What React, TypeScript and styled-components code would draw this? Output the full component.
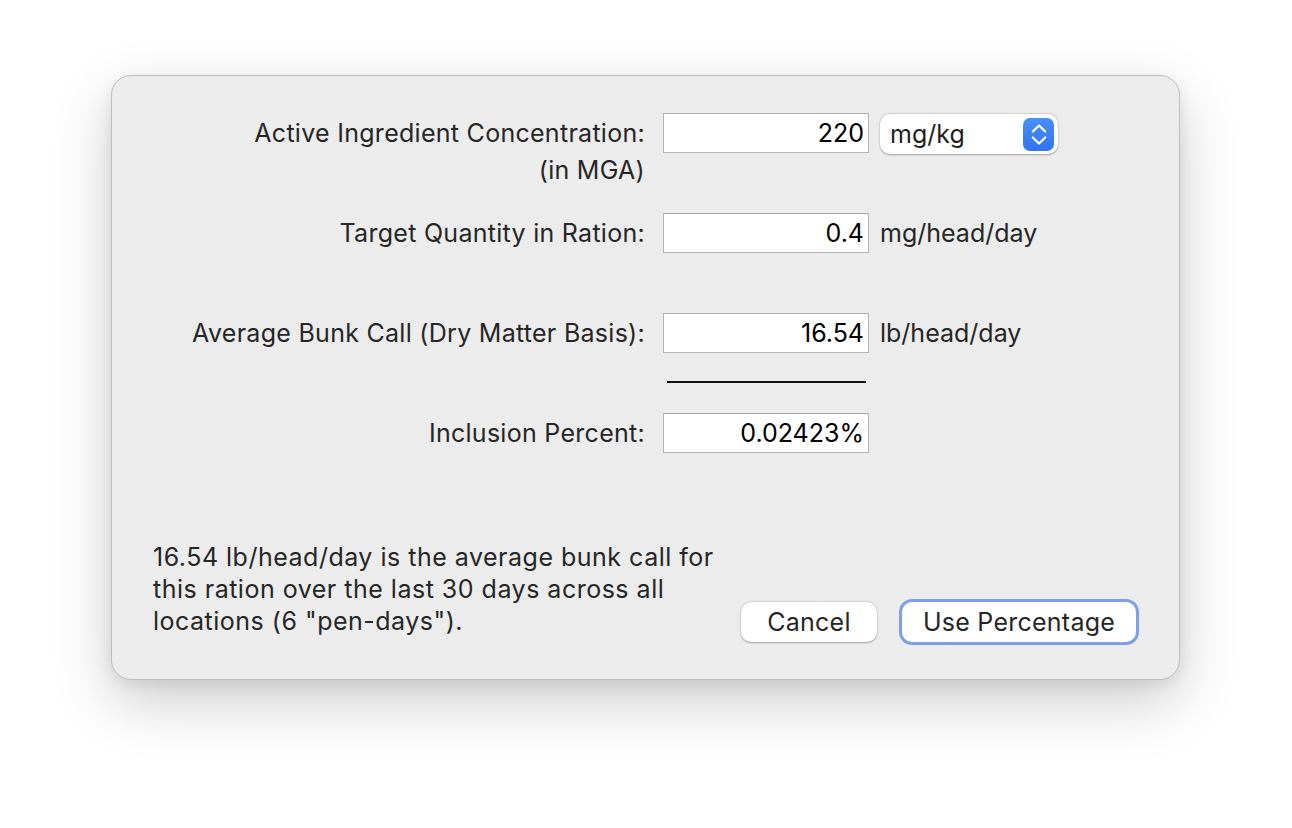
import { ReactElement } from "react";
import styled, { createGlobalStyle } from "styled-components";

const GlobalStyle = createGlobalStyle`
  html, body {
    margin: 0;
    padding: 0;
    background: #ffffff;
  }
  body {
    font-family: "Inter", "Noto Sans", sans-serif;
    -webkit-font-smoothing: antialiased;
  }
`;

type FieldRow = {
  label: string;
  sub?: string;
  value: string;
  unit?: string;
  popup?: string;
};

const rows: FieldRow[] = [
  { label: "Active Ingredient Concentration:", sub: "(in MGA)", value: "220", popup: "mg/kg" },
  { label: "Target Quantity in Ration:", value: "0.4", unit: "mg/head/day" },
  { label: "Average Bunk Call (Dry Matter Basis):", value: "16.54", unit: "lb/head/day" },
];

const rowHeights = ["100px", "100px", "60px"];

function Stepper(): ReactElement {
  return (
    <StepperBox>
      <svg width="16" height="23" viewBox="0 0 16 23" fill="none">
        <path d="M1.8 8.5 L8 2.5 L14.2 8.5" stroke="#fff" strokeWidth="2.2" strokeLinecap="round" strokeLinejoin="round" />
        <path d="M1.8 14.5 L8 20.5 L14.2 14.5" stroke="#fff" strokeWidth="2.2" strokeLinecap="round" strokeLinejoin="round" />
      </svg>
    </StepperBox>
  );
}

export default function App(): ReactElement {
  return (
    <Page>
      <GlobalStyle />
      <Dialog>
        <Form>
          {rows.map((row, i) => (
            <Row key={row.label} height={rowHeights[i]}>
              <Label>
                <LabelLine>{row.label}</LabelLine>
                {row.sub && <LabelSub>{row.sub}</LabelSub>}
              </Label>
              <Field>{row.value}</Field>
              {row.popup && (
                <Popup>
                  <span>{row.popup}</span>
                  <Stepper />
                </Popup>
              )}
              {row.unit && <Unit>{row.unit}</Unit>}
            </Row>
          ))}
          <DividerRow>
            <Divider />
          </DividerRow>
          <Row height="40px">
            <Label>
              <LabelLine>Inclusion Percent:</LabelLine>
            </Label>
            <Field>0.02423%</Field>
          </Row>
        </Form>
        <Footer>
          <Note>
            16.54 lb/head/day is the average bunk call for
            <br />
            this ration over the last 30 days across all
            <br />
            locations (6 "pen-days").
          </Note>
          <Buttons>
            <Button>Cancel</Button>
            <Button primary>Use Percentage</Button>
          </Buttons>
        </Footer>
      </Dialog>
    </Page>
  );
}

const Page = styled.div`
  width: 1292px;
  height: 828px;
  padding: 75px 0 0 111px;
  box-sizing: border-box;
`;

const Dialog = styled.div`
  width: 1069px;
  height: 605px;
  box-sizing: border-box;
  background: #ececec;
  border: 1px solid #bebebe;
  border-radius: 20px;
  box-shadow: 0 22px 60px rgba(0, 0, 0, 0.2), 0 4px 14px rgba(0, 0, 0, 0.08);
  padding: 37px 43px 37px 41px;
  display: flex;
  flex-direction: column;
  color: #262626;
  font-size: 25px;
`;

const Form = styled.div`
  display: flex;
  flex-direction: column;
`;

const Row = styled.div<{ height: string }>`
  display: grid;
  grid-template-columns: 510px 206px auto;
  align-items: start;
  height: ${(p) => p.height};
`;

const Label = styled.div`
  display: flex;
  flex-direction: column;
  align-items: flex-end;
  padding-right: 18px;
  text-align: right;
  letter-spacing: 0.28px;
`;

const LabelLine = styled.span`
  line-height: 40px;
  white-space: nowrap;
`;

const LabelSub = styled.span`
  line-height: 34px;
`;

const Field = styled.div`
  height: 40px;
  box-sizing: border-box;
  background: #ffffff;
  border: 1px solid #b4b4b4;
  border-top-color: #a8a8a8;
  padding: 0 4px;
  text-align: right;
  line-height: 38px;
  color: #000000;
`;

const Popup = styled.div`
  margin-left: 11px;
  margin-top: 1px;
  width: 178px;
  height: 40px;
  box-sizing: border-box;
  background: #ffffff;
  border-radius: 10px;
  box-shadow: 0 0.5px 2px rgba(0, 0, 0, 0.3), 0 0 0 0.5px rgba(0, 0, 0, 0.06);
  display: flex;
  align-items: center;
  justify-content: space-between;
  padding: 0 4px 0 10px;
  color: #1f1f1f;
`;

const StepperBox = styled.div`
  width: 31px;
  height: 33px;
  border-radius: 7px;
  background: linear-gradient(#4a90f8, #2f74f1);
  display: flex;
  align-items: center;
  justify-content: center;
`;

const Unit = styled.div`
  margin-left: 11px;
  line-height: 40px;
  white-space: nowrap;
`;

const DividerRow = styled.div`
  height: 40px;
  display: grid;
  grid-template-columns: 514px 199px;
`;

const Divider = styled.div`
  grid-column: 2;
  margin-top: 8px;
  height: 2px;
  background: #111111;
`;

const Footer = styled.div`
  margin-top: auto;
  display: flex;
  justify-content: space-between;
  align-items: flex-end;
`;

const Note = styled.p`
  margin: 0 0 5px 0;
  line-height: 32px;
  color: #262626;
  letter-spacing: 0.5px;
`;

const Buttons = styled.div`
  display: flex;
  gap: 25px;
  align-items: center;
`;

const Button = styled.button<{ primary?: boolean }>`
  font-family: inherit;
  font-size: 25px;
  letter-spacing: 0.25px;
  color: #262626;
  height: 40px;
  padding: 0 ${(p) => (p.primary ? "20px" : "26px")};
  min-width: ${(p) => (p.primary ? "234px" : "136px")};
  background: #ffffff;
  border: none;
  border-radius: 10px;
  box-shadow: ${(p) =>
    p.primary
      ? "0 0 0 3px #7fa0e8"
      : "0 0.5px 2px rgba(0, 0, 0, 0.3), 0 0 0 0.5px rgba(0, 0, 0, 0.06)"};
`;
